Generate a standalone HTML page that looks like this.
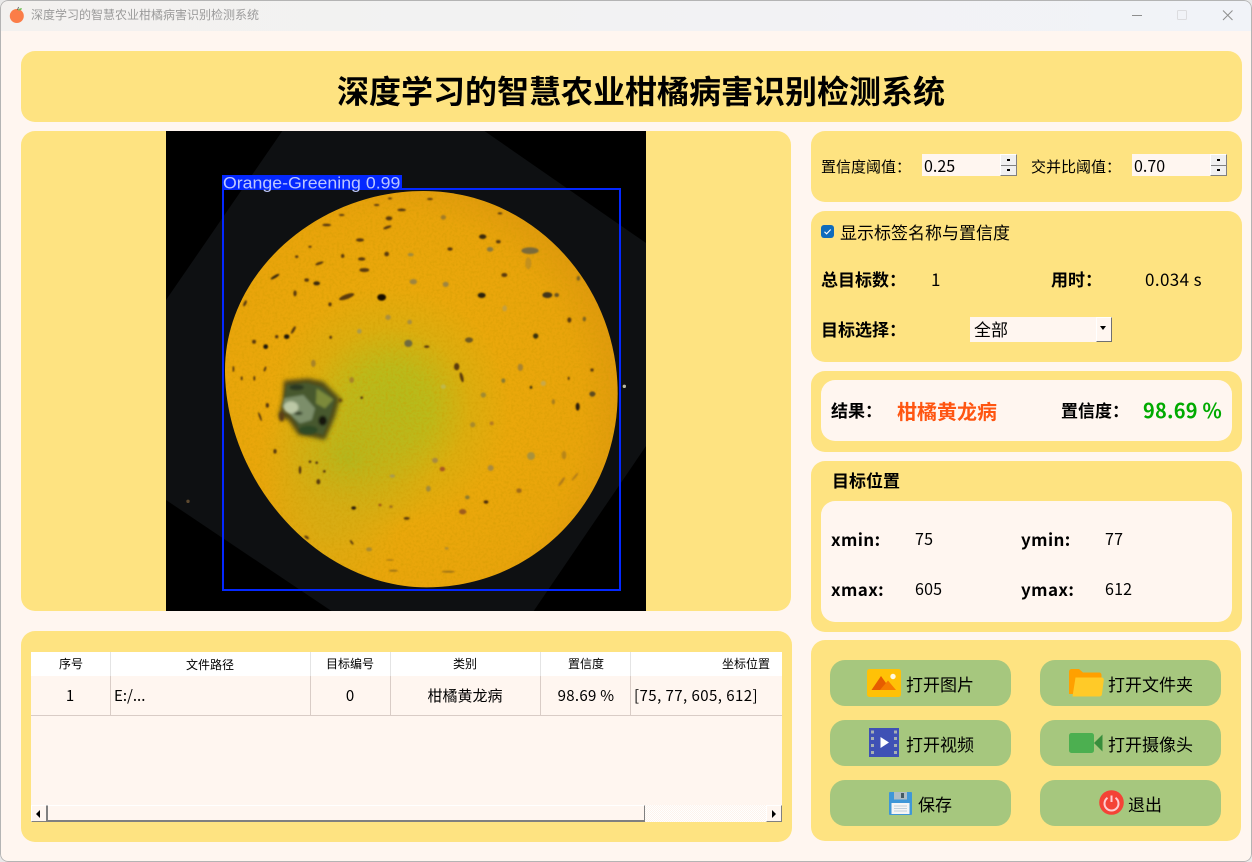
<!DOCTYPE html>
<html lang="zh">
<head>
<meta charset="utf-8">
<title>深度学习的智慧农业柑橘病害识别检测系统</title>
<style>
html,body{margin:0;padding:0;width:1252px;height:862px;overflow:hidden;background:#e9e9e9}
*{box-sizing:border-box}
#win{position:absolute;left:0;top:0;width:1252px;height:862px;background:#fff6f0;border-radius:8px;overflow:hidden;font-family:"Noto Sans CJK SC","Liberation Sans",sans-serif;color:#000}
#bar{position:absolute;left:0;top:0;width:1252px;height:31px;background:linear-gradient(90deg,#f3f1ef 0,#f2f2f3 50%,#f1f3f8 100%)}
#edge{position:absolute;left:0;top:0;width:1252px;height:862px;border:1px solid #b4b4b4;border-radius:8px;pointer-events:none;z-index:9}
.t{position:absolute;white-space:nowrap;line-height:20px;height:20px}
.p{position:absolute;background:#fee381;border-radius:14px}
.in{position:absolute;background:#fff6f0;border-radius:14px}
.b{font-weight:700;font-size:17px}
.n{font-size:16px;letter-spacing:.2px}
.btn{position:absolute;width:181px;height:46px;background:#a6c77e;border-radius:15px}
.btn .t{font-size:17px;top:14px}
.box{position:absolute;background:#fff6f0;height:22px}
.spin{position:absolute;top:0;right:0;width:17px;height:22px;background:#f0f0f0;border:1px solid;border-color:#fff #808080 #808080 #fff}
.spin i{position:absolute;left:0;right:0;top:10px;height:1px;background:#808080}
.spin b{position:absolute;left:6px;width:3px;height:2px;background:#000}
.hd{position:absolute;font-size:12px;line-height:16px;height:16px;white-space:nowrap;transform:translateX(-50%)}
.rw{position:absolute;font-size:15px;line-height:20px;height:20px;white-space:nowrap}
.c{transform:translateX(-50%)}
.vl{position:absolute;width:1px}
svg{position:absolute;display:block;overflow:hidden}
</style>
</head>
<body>
<div id="win">
<div id="bar"></div>
<svg style="left:9px;top:6px" width="17" height="18" viewBox="0 0 17 18"><circle cx="7.800" cy="10" r="7" fill="#fb7d48"/><path d="M9 4.200c.8-1.600 2.400-2.200 4-1.800-.4 1.600-2 2.600-4 1.800z" fill="#6fbf55"/><path d="M8.500 4 9.500 1" stroke="#555" stroke-width=".8"/></svg>
<div class="t" style="left:31px;top:5px;font-size:12px;color:#9b9b9b">深度学习的智慧农业柑橘病害识别检测系统</div>
<svg style="left:1130px;top:5px" width="110" height="20" viewBox="0 0 110 20"><path d="M2 10.500h10" stroke="#8e8e8e" stroke-width="1"/><rect x="47.500" y="5.500" width="9" height="9" rx="1" fill="none" stroke="#dcdcdf"/><path d="M93 5.500l9.500 9.500M102.500 5.500 93 15" stroke="#8e8e8e" stroke-width="1"/></svg>

<div class="p" style="left:21px;top:51px;width:1221px;height:71px"></div>
<div class="t" style="left:337px;top:70px;height:40px;line-height:40px;font-size:32px;font-weight:700">深度学习的智慧农业柑橘病害识别检测系统</div>

<div class="p" style="left:21px;top:131px;width:770px;height:480px"></div>
<svg style="left:166px;top:131px" width="480" height="480" viewBox="18 3 1440 1440">
<defs>
<radialGradient id="g1" gradientUnits="userSpaceOnUse" cx="690" cy="830" r="720">
<stop offset="0" stop-color="#b2bc1c"/><stop offset=".17" stop-color="#bcba1a"/><stop offset=".33" stop-color="#dcae0f"/><stop offset=".5" stop-color="#eaa80b"/><stop offset=".8" stop-color="#e9a40b"/><stop offset="1" stop-color="#de980d"/>
</radialGradient>
<radialGradient id="g2" gradientUnits="userSpaceOnUse" cx="560" cy="990" r="270">
<stop offset="0" stop-color="#b0b81e" stop-opacity=".9"/><stop offset="1" stop-color="#c8b01a" stop-opacity="0"/>
</radialGradient>
<radialGradient id="g4" gradientUnits="userSpaceOnUse" cx="500" cy="1190" r="220">
<stop offset="0" stop-color="#d4ae16" stop-opacity=".7"/><stop offset="1" stop-color="#d4ae16" stop-opacity="0"/>
</radialGradient>
<filter id="bl" x="-5%" y="-5%" width="110%" height="110%"><feGaussianBlur stdDeviation="2"/></filter>
<filter id="bl2" x="-20%" y="-20%" width="140%" height="140%"><feGaussianBlur stdDeviation="6"/></filter>
<filter id="bl3" x="-20%" y="-20%" width="140%" height="140%"><feGaussianBlur stdDeviation="4"/></filter>
<filter id="tx" x="0" y="0" width="100%" height="100%"><feTurbulence type="fractalNoise" baseFrequency=".13" numOctaves="2" seed="4" result="n"/><feColorMatrix in="n" type="matrix" values="0 0 0 0 .6  0 0 0 0 .32  0 0 0 0 0  0 0 0 .9 -.36" result="m"/><feComposite in="m" in2="SourceAlpha" operator="in"/></filter>
</defs>
<rect x="18" y="0" width="1440" height="1446" fill="#000"/>
<polygon points="18,510 369,0 969,0 1458,339 1458,948 1119,1446 519,1446 18,1110" fill="#0e1012"/>
<circle cx="84" cy="1114" r="5" fill="#5e4a30"/><circle cx="1393" cy="769" r="5" fill="#b8b8a0"/>
<path d="M790 183C1115 183 1373 460 1373 790C1373 1115 1120 1372 800 1372C470 1372 195 1050 195 720C195 430 470 183 790 183Z" fill="url(#g1)"/>
<path d="M790 183C1115 183 1373 460 1373 790C1373 1115 1120 1372 800 1372C470 1372 195 1050 195 720C195 430 470 183 790 183Z" fill="url(#g2)"/>
<path d="M790 183C1115 183 1373 460 1373 790C1373 1115 1120 1372 800 1372C470 1372 195 1050 195 720C195 430 470 183 790 183Z" fill="url(#g4)"/>
<path d="M790 183C1115 183 1373 460 1373 790C1373 1115 1120 1372 800 1372C470 1372 195 1050 195 720C195 430 470 183 790 183Z" fill="#000" filter="url(#tx)"/>
<g fill="#5a3a10" filter="url(#bl)">
<ellipse cx="665" cy="502" rx="13" ry="10" fill="#120a05"/>
<ellipse cx="560" cy="500" rx="24" ry="7" transform="rotate(-20 560 500)"/>
<ellipse cx="965" cy="496" rx="12" ry="8" fill="#2c2210"/><ellipse cx="1162" cy="495" rx="15" ry="9" fill="#40361a"/>
<ellipse cx="968" cy="320" rx="11" ry="7" fill="#3a2c10"/><ellipse cx="1110" cy="362" rx="26" ry="10" fill="#7a6a3a"/>
<ellipse cx="687" cy="265" rx="10" ry="6"/><ellipse cx="682" cy="292" rx="13" ry="4" transform="rotate(-20 682 292)"/><ellipse cx="725" cy="240" rx="13" ry="4"/>
<ellipse cx="500" cy="285" rx="13" ry="4"/><ellipse cx="600" cy="330" rx="12" ry="5"/><ellipse cx="605" cy="387" rx="11" ry="5"/><ellipse cx="613" cy="420" rx="15" ry="6"/>
<ellipse cx="478" cy="400" rx="13" ry="4" transform="rotate(-20 478 400)"/><ellipse cx="470" cy="460" rx="10" ry="6" fill="#3a2a10"/><ellipse cx="440" cy="450" rx="7" ry="5"/>
<ellipse cx="345" cy="440" rx="15" ry="4" transform="rotate(-30 345 440)" fill="#3a2a10"/><ellipse cx="380" cy="620" rx="8" ry="7" fill="#1d140a"/><ellipse cx="317" cy="650" rx="7" ry="7" fill="#1d140a"/><ellipse cx="282" cy="635" rx="6" ry="6"/>
<ellipse cx="745" cy="640" rx="12" ry="11" fill="#6e6a40"/><ellipse cx="927" cy="630" rx="12" ry="8" fill="#6e5a22"/><ellipse cx="1127" cy="618" rx="8" ry="8" fill="#38300f"/><ellipse cx="1228" cy="570" rx="6" ry="8"/>
<ellipse cx="890" cy="710" rx="8" ry="11"/><ellipse cx="905" cy="742" rx="5" ry="15" transform="rotate(-15 905 742)"/><ellipse cx="1253" cy="830" rx="6" ry="12" fill="#2a1e0a"/><ellipse cx="1297" cy="792" rx="9" ry="8" fill="#5a4a20"/>
<ellipse cx="1081" cy="712" rx="8" ry="11" fill="#a88430"/><ellipse cx="575" cy="750" rx="7" ry="9" fill="#a88428"/><ellipse cx="460" cy="700" rx="7" ry="11" fill="#a88428"/><ellipse cx="970" cy="795" rx="8" ry="8" fill="#a08a30"/>
<ellipse cx="938" cy="884" rx="8" ry="8" fill="#a88a2a"/><ellipse cx="995" cy="880" rx="6" ry="6" fill="#b47a20"/><ellipse cx="1113" cy="978" rx="12" ry="12" fill="#a8923c"/><ellipse cx="847" cy="1017" rx="8" ry="7" fill="#a85820"/>
<ellipse cx="1077" cy="1082" rx="8" ry="7" fill="#a06a18"/><ellipse cx="978" cy="1116" rx="7" ry="5" fill="#4a2a0a"/><ellipse cx="908" cy="1145" rx="11" ry="8" fill="#9e5c1c"/><ellipse cx="740" cy="1165" rx="9" ry="4"/>
<ellipse cx="581" cy="1134" rx="7" ry="5" fill="#2a1c08"/><ellipse cx="475" cy="1055" rx="6" ry="8"/><ellipse cx="420" cy="1020" rx="4" ry="12"/><ellipse cx="345" cy="964" rx="5" ry="7"/><ellipse cx="300" cy="860" rx="3" ry="14" transform="rotate(-20 300 860)"/>
<ellipse cx="322" cy="826" rx="5" ry="7"/><ellipse cx="315" cy="717" rx="3" ry="8" transform="rotate(20 315 717)"/><ellipse cx="1105" cy="400" rx="9" ry="18" fill="#a08030" opacity=".5"/>
<ellipse cx="1205" cy="1055" rx="4" ry="17" transform="rotate(35 1205 1055)" fill="#b07c18"/><ellipse cx="1245" cy="1040" rx="3" ry="15" transform="rotate(40 1245 1040)" fill="#b07c18"/><ellipse cx="1212" cy="975" rx="7" ry="13" fill="#b88618"/>
<ellipse cx="760" cy="455" rx="11" ry="8" fill="#9d8440"/><ellipse cx="857" cy="463" rx="9" ry="8" fill="#9d8440"/><ellipse cx="684" cy="562" rx="8" ry="8" fill="#a88e40"/><ellipse cx="749" cy="576" rx="7" ry="7" fill="#a88e40"/>
<ellipse cx="598" cy="604" rx="7" ry="7" fill="#a89a50"/><ellipse cx="825" cy="991" rx="9" ry="8" fill="#a88a40"/><ellipse cx="992" cy="1014" rx="9" ry="9" fill="#a88a40"/><ellipse cx="805" cy="1076" rx="7" ry="9" fill="#a08a3c"/>
<ellipse cx="922" cy="1102" rx="7" ry="6" fill="#8a7a30"/><ellipse cx="697" cy="1038" rx="8" ry="5" fill="#a89a50"/><ellipse cx="990" cy="358" rx="10" ry="7" fill="#8a7a40"/><ellipse cx="850" cy="262" rx="8" ry="7" fill="#a07c28"/>
<ellipse cx="548" cy="378" rx="5" ry="6"/><ellipse cx="752" cy="374" rx="9" ry="5" fill="#a08a3c"/><ellipse cx="1033" cy="435" rx="9" ry="6"/><ellipse cx="660" cy="1125" rx="5" ry="4" fill="#a05a14"/><ellipse cx="693" cy="1130" rx="5" ry="4" fill="#a0701c"/>
<ellipse cx="1113" cy="772" rx="4" ry="5" fill="#4a3a10"/><ellipse cx="1030" cy="752" rx="6" ry="7" fill="#8a7a30"/><ellipse cx="605" cy="803" rx="4" ry="4"/><ellipse cx="1180" cy="815" rx="5" ry="8" fill="#a87e1c"/>
<ellipse cx="1150" cy="760" rx="8" ry="8" fill="#c8a848"/><ellipse cx="850" cy="770" rx="8" ry="7" fill="#c0b848"/><ellipse cx="1034" cy="535" rx="7" ry="9" fill="#c4a040"/>
<ellipse cx="255" cy="520" rx="4" ry="10" transform="rotate(25 255 520)"/><ellipse cx="410" cy="380" rx="5" ry="4"/><ellipse cx="450" cy="350" rx="5" ry="3"/><ellipse cx="545" cy="255" rx="8" ry="3"/><ellipse cx="650" cy="225" rx="8" ry="3"/><ellipse cx="690" cy="205" rx="6" ry="3"/><ellipse cx="810" cy="207" rx="9" ry="3"/><ellipse cx="1020" cy="250" rx="7" ry="3"/><ellipse cx="1015" cy="335" rx="7" ry="5"/><ellipse cx="870" cy="357" rx="8" ry="5"/><ellipse cx="680" cy="372" rx="7" ry="7"/><ellipse cx="510" cy="523" rx="5" ry="6"/><ellipse cx="405" cy="490" rx="5" ry="9"/><ellipse cx="350" cy="620" rx="5" ry="5"/><ellipse cx="400" cy="600" rx="4" ry="13" transform="rotate(30 400 600)"/><ellipse cx="220" cy="717" rx="3" ry="9"/><ellipse cx="245" cy="745" rx="3" ry="6"/><ellipse cx="283" cy="745" rx="3" ry="7"/><ellipse cx="512" cy="622" rx="4" ry="5"/><ellipse cx="800" cy="650" rx="8" ry="4"/><ellipse cx="1273" cy="567" rx="5" ry="7" fill="#7c6420"/><ellipse cx="1296" cy="720" rx="5" ry="5"/><ellipse cx="1226" cy="745" rx="3" ry="5"/><ellipse cx="1190" cy="495" rx="7" ry="6" fill="#6a5420"/><ellipse cx="1255" cy="445" rx="5" ry="7" fill="#7c6420"/><ellipse cx="450" cy="995" rx="4" ry="4"/><ellipse cx="470" cy="998" rx="4" ry="4"/><ellipse cx="493" cy="1024" rx="4" ry="4"/><ellipse cx="440" cy="1222" rx="8" ry="4" transform="rotate(35 440 1222)"/><ellipse cx="575" cy="1237" rx="3" ry="8" transform="rotate(-35 575 1237)"/><ellipse cx="627" cy="1258" rx="9" ry="6" fill="#a88a30"/><ellipse cx="860" cy="1255" rx="6" ry="4" fill="#b08c30"/><ellipse cx="700" cy="1322" rx="14" ry="3" fill="#a07414"/><ellipse cx="865" cy="1325" rx="20" ry="3" fill="#a07414"/><ellipse cx="690" cy="1290" rx="12" ry="2" fill="#a07414"/>
</g>
<g filter="url(#bl2)"><path d="M372 752 445 745 490 755 540 805 525 860 495 930 450 920 415 915 385 870 355 860 368 810Z" fill="#3b3a16" opacity=".85"/></g>
<g filter="url(#bl3)">
<path d="M380 765 440 758 485 770 525 808 512 855 490 915 450 905 420 900 395 860 368 830Z" fill="#46582f"/>
<path d="M372 805 430 795 465 835 455 870 420 880 385 850 366 830Z" fill="#7c8e6a"/>
<path d="M470 775 520 808 495 835 468 820Z" fill="#7c8a3a"/>
<ellipse cx="393" cy="832" rx="22" ry="18" fill="#bcc8a6"/>
<ellipse cx="445" cy="900" rx="28" ry="13" fill="#2f4a26"/><ellipse cx="488" cy="872" rx="13" ry="15" fill="#17170f"/><ellipse cx="365" cy="860" rx="8" ry="15" fill="#5a3c14"/>
<ellipse cx="410" cy="772" rx="22" ry="9" fill="#2c3820"/><ellipse cx="415" cy="850" rx="13" ry="5" fill="#2e3a20"/><circle cx="541" cy="811" r="5" fill="#4a2a0a"/>
</g>
<rect x="189" y="177" width="1191" height="1203" fill="none" stroke="#0428ff" stroke-width="6"/>
<rect x="186" y="135" width="540" height="42" fill="#0428ff"/>
<text x="189" y="175" font-family="Liberation Sans,sans-serif" font-size="49" fill="#bcc7ff" textLength="532" lengthAdjust="spacingAndGlyphs">Orange-Greening 0.99</text>
</svg>

<div class="p" style="left:21px;top:631px;width:771px;height:211px"></div>
<div style="position:absolute;left:31px;top:652px;width:751px;height:170px;background:#fff6f0;overflow:hidden">
  <div style="position:absolute;left:0;top:0;width:751px;height:24px;background:#fff"></div>
  <div style="position:absolute;left:0;top:63px;width:751px;height:1px;background:#d9ccc6"></div>
  <div class="vl" style="left:79px;top:0;height:24px;background:#e4e4e4"></div><div class="vl" style="left:79px;top:24px;height:39px;background:#d9ccc6"></div>
  <div class="vl" style="left:279px;top:0;height:24px;background:#e4e4e4"></div><div class="vl" style="left:279px;top:24px;height:39px;background:#d9ccc6"></div>
  <div class="vl" style="left:359px;top:0;height:24px;background:#e4e4e4"></div><div class="vl" style="left:359px;top:24px;height:39px;background:#d9ccc6"></div>
  <div class="vl" style="left:509px;top:0;height:24px;background:#e4e4e4"></div><div class="vl" style="left:509px;top:24px;height:39px;background:#d9ccc6"></div>
  <div class="vl" style="left:599px;top:0;height:24px;background:#e4e4e4"></div><div class="vl" style="left:599px;top:24px;height:39px;background:#d9ccc6"></div>
  <div class="hd" style="left:40px;top:4px">序号</div>
  <div class="hd" style="left:179px;top:5px">文件路径</div>
  <div class="hd" style="left:319px;top:4px">目标编号</div>
  <div class="hd" style="left:434px;top:4px">类别</div>
  <div class="hd" style="left:555px;top:4px">置信度</div>
  <div class="hd" style="left:715px;top:4px">坐标位置</div>
  <div class="rw c" style="left:39px;top:34px">1</div>
  <div class="rw" style="left:83px;top:34px">E:/...</div>
  <div class="rw c" style="left:319px;top:34px">0</div>
  <div class="rw c" style="left:434px;top:34px">柑橘黄龙病</div>
  <div class="rw c" style="left:555px;top:34px;letter-spacing:.3px">98.69 %</div>
  <div class="rw" style="left:603px;top:34px;letter-spacing:.45px">[75, 77, 605, 612]</div>
  <div style="position:absolute;left:0;top:153px;width:751px;height:17px;background:repeating-conic-gradient(#fff 0 25%,#fdf3ec 0 50%) 0 0/2px 2px"></div>
  <div style="position:absolute;left:0;top:153px;width:16px;height:17px;background:#fff6f0;border:1px solid;border-color:#fff #808080 #808080 #fff"></div>
  <div style="position:absolute;left:5px;top:158px;width:0;height:0;border:4px solid transparent;border-right:4px solid #000;border-left:0"></div>
  <div style="position:absolute;left:16px;top:153px;width:598px;height:17px;background:#fff6f0;border:1px solid;border-top-color:#fff;border-left-color:#808080;border-right-color:#808080;border-bottom:2px solid #808080"></div>
  <div style="position:absolute;left:735px;top:153px;width:16px;height:17px;background:#fff6f0;border:1px solid;border-color:#fff #808080 #808080 #fff"></div>
  <div style="position:absolute;left:741px;top:158px;width:0;height:0;border:4px solid transparent;border-left:4px solid #000;border-right:0"></div>
</div>

<div class="p" style="left:811px;top:131px;width:431px;height:71px"></div>
<div class="t" style="left:821px;top:157px;font-size:15px">置信度阈值：</div>
<div class="box" style="left:922px;top:154px;width:95px"><div class="t" style="left:2px;top:1px;font-size:16px">0.25</div><div class="spin"><i></i><b style="top:4px"></b><b style="top:14px"></b></div></div>
<div class="t" style="left:1031px;top:157px;font-size:15px">交并比阈值：</div>
<div class="box" style="left:1132px;top:154px;width:95px"><div class="t" style="left:2px;top:1px;font-size:16px">0.70</div><div class="spin"><i></i><b style="top:4px"></b><b style="top:14px"></b></div></div>

<div class="p" style="left:811px;top:211px;width:431px;height:151px"></div>
<svg style="left:821px;top:225px" width="13" height="13" viewBox="0 0 13 13"><rect width="13" height="13" rx="3" fill="#0f6cbd"/><path d="M3.500 6.800 5.600 8.800 9.700 4.500" fill="none" stroke="#fff" stroke-width="1.100"/></svg>
<div class="t" style="left:840px;top:222px;font-size:17px">显示标签名称与置信度</div>
<div class="t b" style="left:821px;top:269px">总目标数：</div>
<div class="t" style="left:931px;top:269px;font-size:17px">1</div>
<div class="t b" style="left:1051px;top:269px">用时：</div>
<div class="t" style="left:1145px;top:269px;font-size:17px;letter-spacing:.4px">0.034 s</div>
<div class="t b" style="left:821px;top:319px">目标选择：</div>
<div class="box" style="left:970px;top:317px;width:142px;height:25px"><div class="t" style="left:4px;top:2px;font-size:17px">全部</div>
  <div style="position:absolute;right:0;top:0;width:16px;height:25px;background:#fff6f0;border:1px solid;border-color:#fff #707070 #707070 #fff"></div>
  <div style="position:absolute;left:130px;top:9px;width:0;height:0;border:3.500px solid transparent;border-top:4px solid #000;border-bottom:0"></div>
</div>

<div class="p" style="left:811px;top:371px;width:431px;height:81px"></div>
<div class="in" style="left:821px;top:380px;width:411px;height:61px"></div>
<div class="t b" style="left:831px;top:400px">结果：</div>
<div class="t" style="left:897px;top:401px;font-size:20px;font-weight:700;color:#ff5511">柑橘黄龙病</div>
<div class="t b" style="left:1061px;top:400px">置信度：</div>
<div class="t" style="left:1143px;top:400px;font-size:20px;font-weight:700;color:#00aa00;letter-spacing:.2px">98.69 %</div>

<div class="p" style="left:811px;top:461px;width:431px;height:171px"></div>
<div class="t b" style="left:832px;top:470px">目标位置</div>
<div class="in" style="left:821px;top:501px;width:411px;height:121px"></div>
<div class="t b" style="left:831px;top:529px;letter-spacing:.4px">xmin:</div>
<div class="t n" style="left:915px;top:528px">75</div>
<div class="t b" style="left:1021px;top:529px;letter-spacing:.4px">ymin:</div>
<div class="t n" style="left:1105px;top:528px">77</div>
<div class="t b" style="left:831px;top:579px;letter-spacing:.4px">xmax:</div>
<div class="t n" style="left:915px;top:578px">605</div>
<div class="t b" style="left:1021px;top:579px;letter-spacing:.4px">ymax:</div>
<div class="t n" style="left:1105px;top:578px">612</div>

<div class="p" style="left:811px;top:640px;width:430px;height:201px"></div>
<div class="btn" style="left:830px;top:660px"><div class="t" style="left:76px">打开图片</div></div>
<div class="btn" style="left:1040px;top:660px"><div class="t" style="left:68px">打开文件夹</div></div>
<div class="btn" style="left:830px;top:720px"><div class="t" style="left:76px">打开视频</div></div>
<div class="btn" style="left:1040px;top:720px"><div class="t" style="left:68px">打开摄像头</div></div>
<div class="btn" style="left:830px;top:780px"><div class="t" style="left:88px">保存</div></div>
<div class="btn" style="left:1040px;top:780px"><div class="t" style="left:88px">退出</div></div>

<svg style="left:867px;top:669px" width="34" height="28" viewBox="0 0 34 28"><rect width="34" height="28" rx="2.500" fill="#ffc107"/><circle cx="26" cy="7.500" r="2.700" fill="#fff8e1"/><path d="M4.500 21 14 7 20 15.500 17.500 21Z" fill="#e65c00"/><path d="M13 21 21 11.500 29 21Z" fill="#f57c00"/></svg>
<svg style="left:1069px;top:669px" width="35" height="28" viewBox="0 0 35 28"><path d="M0 3C0 1 1 0 3 0H10L14 3.500H30C31.500 3.500 32.500 4.500 32.500 6V25H0Z" fill="#ffa000"/><path d="M6.500 8.500H32.500C34 8.500 35 9.500 34.800 11L33 25C32.800 26.800 31.800 27.500 30 27.500H3.500Z" fill="#ffca28"/></svg>
<svg style="left:869px;top:728px" width="30" height="29" viewBox="0 0 30 29"><rect width="30" height="29" fill="#3f51b5"/><g fill="#a6b0b4"><rect x="2" y="2.500" width="3" height="3"/><rect x="2" y="9" width="3" height="3"/><rect x="2" y="16" width="3" height="3"/><rect x="2" y="23" width="3" height="3"/><rect x="25" y="2.500" width="3" height="3"/><rect x="25" y="9" width="3" height="3"/><rect x="25" y="16" width="3" height="3"/><rect x="25" y="23" width="3" height="3"/></g><path d="M11.500 9V20L20 14.500Z" fill="#fff"/></svg>
<svg style="left:1069px;top:733px" width="34" height="20" viewBox="0 0 34 20"><rect width="25" height="20" rx="2.500" fill="#4caf50"/><path d="M25 10 33.500 1.500V18.500Z" fill="#388e3c"/></svg>
<svg style="left:889px;top:792px" width="23" height="23" viewBox="0 0 23 23"><path d="M1 0H22C22.600 0 23 .4 23 1V22C23 22.600 22.600 23 22 23H1C.4 23 0 22.600 0 22V1C0 .4.400 0 1 0Z" fill="#3f97d8"/><rect x="5" y="0" width="13" height="7.500" fill="#b0bec5"/><rect x="12" y="1" width="3" height="5" fill="#455a64"/><rect x="2.500" y="11" width="18" height="11" fill="#f5f5f5"/><path d="M5 14H18M5 16.500H18M5 19H18" stroke="#b0c4d4" stroke-width=".8"/></svg>
<svg style="left:1099px;top:790px" width="25" height="25" viewBox="0 0 25 25"><circle cx="12.500" cy="12.500" r="12.300" fill="#f44336"/><path d="M12.500 5.500V12" stroke="#ffcdd2" stroke-width="2" fill="none"/><path d="M8.500 7.800A7 7 0 1 0 16.500 7.800" stroke="#ffcdd2" stroke-width="2" fill="none"/></svg>
<div id="edge"></div>
</div>
</body>
</html>
